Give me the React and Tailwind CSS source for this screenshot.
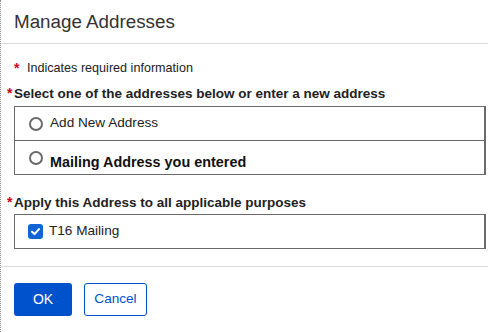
import React from "react";

function Req({ className = "" }) {
  return <span className={`text-[#d0021b] font-bold leading-none ${className}`}>*</span>;
}

function Radio() {
  return <span className="block w-[14px] h-[14px] rounded-full border-2 border-[#6b6b6b] bg-white shrink-0" />;
}

function Check() {
  return (
    <span className="flex items-center justify-center w-[15px] h-[15px] rounded-[3px] bg-[#1164d4] shrink-0">
      <svg width="11" height="11" viewBox="0 0 12 12" fill="none">
        <path d="M2.2 6.3 L4.9 8.8 L9.8 3.4" stroke="white" strokeWidth="2.2" strokeLinecap="round" strokeLinejoin="round" />
      </svg>
    </span>
  );
}

export default function App() {
  return (
    <div
      className="w-[488px] h-[332px] bg-white border-l border-dotted border-[#8a8a8a] text-[#333]"
      style={{ fontFamily: '"Liberation Sans", Arial, sans-serif' }}
    >
      <div className="pl-[13px] pt-[10px] pb-[9px] border-b border-[#dcdcdc]">
        <h1 className="text-[18.8px] leading-[24px] font-normal text-[#333]">Manage Addresses</h1>
      </div>

      <div className="pl-[13px] pr-[2px]">
        <div className="mt-[16px] flex items-start h-[16px]">
          <Req className="w-[13px] text-[14px] mt-[1px]" />
          <span className="text-[12.6px] leading-[16px] text-[#222]">Indicates required information</span>
        </div>

        <div className="mt-[9px] -ml-[7px] flex items-start">
          <Req className="w-[7px] text-[14px] mt-[1px]" />
          <span className="text-[13.5px] leading-[18px] font-bold text-[#222]">
            Select one of the addresses below or enter a new address
          </span>
        </div>

        <div className="mt-[3px] border border-[#6b6b6b] border-r-2">
          <div className="h-[33px] flex items-center pl-[14px] gap-[7px]">
            <Radio />
            <span className="text-[13.6px] text-[#222]">Add New Address</span>
          </div>
          <div className="h-[34px] border-t border-[#6b6b6b] flex items-start pl-[14px] gap-[7px]">
            <span className="mt-[10px]"><Radio /></span>
            <span className="mt-[12px] text-[14.4px] leading-[18px] font-bold text-[#111]">Mailing Address you entered</span>
          </div>
        </div>

        <div className="mt-[19px] -ml-[7px] flex items-start">
          <Req className="w-[7px] text-[14px] mt-[1px]" />
          <span className="text-[13.5px] leading-[18px] font-bold text-[#222]">
            Apply this Address to all applicable purposes
          </span>
        </div>

        <div className="mt-[2px] h-[35px] border border-[#6b6b6b] border-r-2 flex items-center pl-[13px] gap-[6px]">
          <Check />
          <span className="text-[13.6px] text-[#222]">T16 Mailing</span>
        </div>
      </div>

      <div className="mt-[17px] border-t border-[#dcdcdc]" />

      <div className="pl-[13px] mt-[16px] flex gap-[12px]">
        <button className="w-[58px] h-[33px] rounded-[3px] bg-[#0052cc] text-white text-[14px]">OK</button>
        <button className="w-[63px] h-[33px] rounded-[3px] border border-[#0052cc] bg-white text-[#0052cc] text-[13.6px]">
          Cancel
        </button>
      </div>
    </div>
  );
}
